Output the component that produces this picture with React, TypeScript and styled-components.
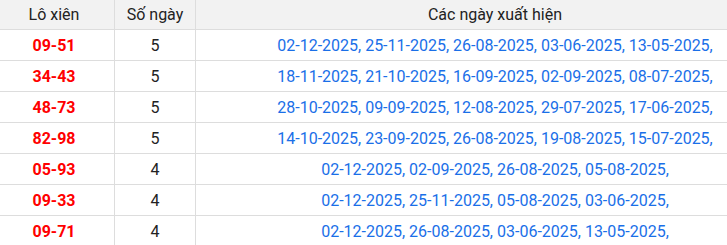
import React from "react";
import styled, { createGlobalStyle } from "styled-components";

const Global = createGlobalStyle`
  html, body { margin: 0; padding: 0; background: #fff; overflow: hidden; }
  body { font-family: Roboto, "Liberation Sans", Arial, sans-serif; }
`;

const Wrap = styled.div`
  width: 727px;
  height: 245px;
  overflow: hidden;
`;

const Table = styled.table`
  margin-left: -7px;
  width: 802px;
  border-collapse: collapse;
  table-layout: fixed;
  font-size: 16px;
`;

const Th = styled.th<{ $w?: number }>`
  width: ${(p) => (p.$w ? `${p.$w}px` : "auto")};
  height: 29px;
  padding: 0;
  background: #f2f2f2;
  color: #222;
  font-weight: 400;
  text-align: center;
  border: 1px solid #dddddd;
  border-top: none;
`;

const Td = styled.td`
  height: 30px;
  padding: 0;
  text-align: center;
  border: 1px solid #dddddd;
  color: #222;
`;

const Pair = styled(Td)`
  color: #ff0000;
  font-weight: 700;
`;

const Dates = styled(Td)`
  color: #1a6fe8;
`;

const rows: [string, number, string[]][] = [
  ["09-51", 5, ["02-12-2025", "25-11-2025", "26-08-2025", "03-06-2025", "13-05-2025"]],
  ["34-43", 5, ["18-11-2025", "21-10-2025", "16-09-2025", "02-09-2025", "08-07-2025"]],
  ["48-73", 5, ["28-10-2025", "09-09-2025", "12-08-2025", "29-07-2025", "17-06-2025"]],
  ["82-98", 5, ["14-10-2025", "23-09-2025", "26-08-2025", "19-08-2025", "15-07-2025"]],
  ["05-93", 4, ["02-12-2025", "02-09-2025", "26-08-2025", "05-08-2025"]],
  ["09-33", 4, ["02-12-2025", "25-11-2025", "05-08-2025", "03-06-2025"]],
  ["09-71", 4, ["02-12-2025", "26-08-2025", "03-06-2025", "13-05-2025"]],
];

export default function App() {
  return (
    <Wrap>
      <Global />
      <Table>
        <thead>
          <tr>
            <Th $w={120}>Lô xiên</Th>
            <Th $w={80}>Số ngày</Th>
            <Th>Các ngày xuất hiện</Th>
          </tr>
        </thead>
        <tbody>
          {rows.map(([pair, n, dates]) => (
            <tr key={pair}>
              <Pair>{pair}</Pair>
              <Td>{n}</Td>
              <Dates>{dates.map((d) => d + ",").join(" ")}</Dates>
            </tr>
          ))}
        </tbody>
      </Table>
    </Wrap>
  );
}
